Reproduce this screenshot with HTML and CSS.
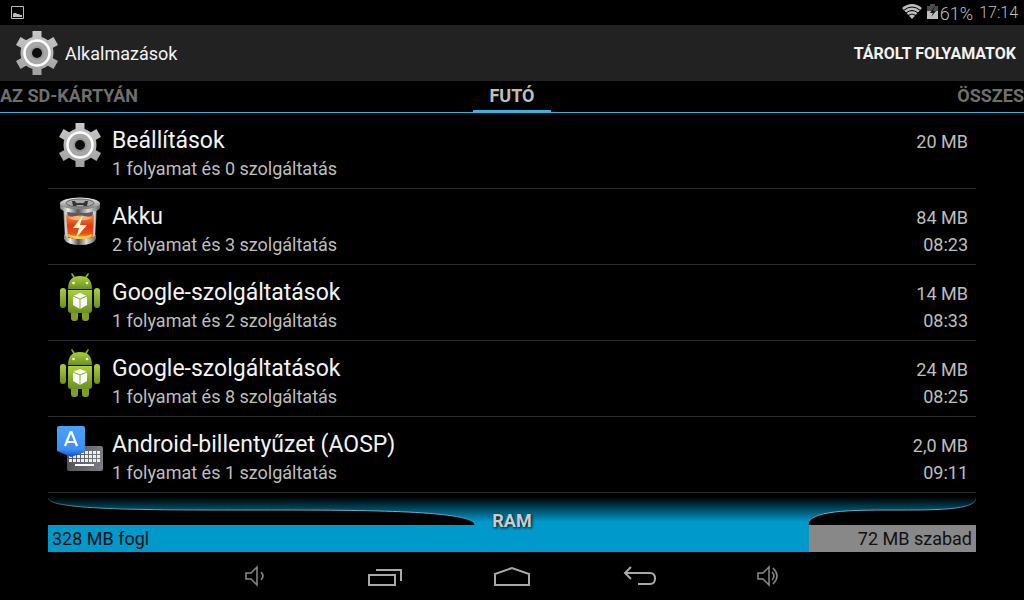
FILE: index.html
```html
<!DOCTYPE html>
<html lang="hu">
<head>
    <meta charset="utf-8">
    <title>Alkalmazások</title>
    <link rel="stylesheet" href="styles.css">
</head>
<body>
    <!-- shared icons -->
    <svg class="sprite" aria-hidden="true">
        <defs>
            <linearGradient id="metal" gradientUnits="userSpaceOnUse" x1="0" y1="2" x2="0" y2="46">
                <stop offset="0" stop-color="#c8c8c8"/>
                <stop offset="1" stop-color="#a0a0a0"/>
            </linearGradient>
            <linearGradient id="chrome">
                <stop offset="0" stop-color="#777"/>
                <stop offset="0.2" stop-color="#eee"/>
                <stop offset="0.45" stop-color="#555"/>
                <stop offset="0.7" stop-color="#ddd"/>
                <stop offset="1" stop-color="#666"/>
            </linearGradient>
            <linearGradient id="lid" x1="0" y1="0" x2="0" y2="1">
                <stop offset="0" stop-color="#f2f2f2"/>
                <stop offset="1" stop-color="#777"/>
            </linearGradient>
            <linearGradient id="fluid" x1="0" y1="0" x2="0" y2="1">
                <stop offset="0" stop-color="#f28a3a"/>
                <stop offset="0.45" stop-color="#dc3c12"/>
                <stop offset="0.75" stop-color="#e8501a"/>
                <stop offset="1" stop-color="#fdc93c"/>
            </linearGradient>
            <linearGradient id="green" x1="0" y1="0" x2="0" y2="1">
                <stop offset="0" stop-color="#a9cf3c"/>
                <stop offset="1" stop-color="#6d8f1e"/>
            </linearGradient>
            <linearGradient id="blue" x1="0" y1="0" x2="0" y2="1">
                <stop offset="0" stop-color="#4aa3f8"/>
                <stop offset="0.75" stop-color="#3d8ff0"/>
                <stop offset="1" stop-color="#1746e0"/>
            </linearGradient>
            <linearGradient id="keys">
                <stop offset="0" stop-color="#50555c"/>
                <stop offset="1" stop-color="#7b7f84"/>
            </linearGradient>
            <pattern id="keyDots" x="13" y="26" width="4" height="4" patternUnits="userSpaceOnUse">
                <rect width="3" height="3" fill="#eee"/>
            </pattern>
        </defs>
        <symbol id="gear" viewBox="0 0 48 48">
            <path fill="url(#metal)" d="M19.500 2h9v6.500q3 1 6 3l6-3.500l4.500 8l-5.500 3q1 5 0 10l5.500 3l-4.500 8l-6-3.500q-3 2-6 3V46h-9v-6.500q-3-1-6-3l-6 3.500l-4.500-8l5.500-3q-1-5 0-10l-5.500-3l4.500-8l6 3.500q3-2 6-3z"/>
            <circle cx="24" cy="24" r="16.500" fill="url(#metal)"/>
            <circle cx="24" cy="24" r="12.500" fill="#a8a8a8" stroke="#fff" stroke-width="2.500"/>
            <circle cx="24" cy="24" r="7" fill="#979797"/>
            <circle cx="24" cy="24" r="5" fill="#0c0c0c"/>
        </symbol>
        <symbol id="battery" viewBox="0 0 48 48">
            <path d="M7 12h34l-2 28H9z" fill="#5c5c60"/>
            <path d="M8 12h3l2 28h-4zM37 12h3l-1 28h-3z" fill="#ccc"/>
            <path d="M10 18q14 5 28 0l-1 22q-13 5-25 0z" fill="url(#fluid)"/>
            <path d="M12 21q12-5 24 0q-12 5-24 0z" fill="#f8b070"/>
            <path d="M8 37q2 5 16 5t16-5v5q-3 6-16 6t-16-6z" fill="url(#chrome)"/>
            <path d="M12 37q12 5 24 0l-1 3q-11 4-22 0z" fill="#fdca3e"/>
            <path d="M4 7v4q3 5 20 5t20-5V7z" fill="url(#chrome)"/>
            <ellipse cx="24" cy="6.500" rx="20" ry="6" fill="url(#lid)"/>
            <ellipse cx="24" cy="6" rx="14" ry="4" fill="#aaa" stroke="#666"/>
            <path d="M16 4h3l1 2h8l1-2h3l-1 5h-3l-1-1h-6l-1 1h-3z" fill="#333"/>
            <path d="M27 18l-10 13h6l-3 10l11-13h-7z" fill="#fff4d0"/>
        </symbol>
        <symbol id="android" viewBox="0 0 48 48">
            <path d="M16 1l3 5M32 1l-3 5" stroke="#8fb52c" stroke-width="1.500" stroke-linecap="round"/>
            <path d="M12 16q0-13 12-13t12 13z" fill="url(#green)"/>
            <circle cx="17.500" cy="10" r="1.300" fill="#fff"/>
            <circle cx="31" cy="10" r="1.300" fill="#fff"/>
            <rect x="4" y="15" width="6" height="20" rx="3" fill="url(#green)"/>
            <rect x="38" y="15" width="6" height="20" rx="3" fill="url(#green)"/>
            <rect x="15" y="34" width="7" height="14" rx="3" fill="#7c9f28"/>
            <rect x="26" y="34" width="7" height="14" rx="3" fill="#7c9f28"/>
            <path d="M12 17h24v20q0 3-3 3H15q-3 0-3-3z" fill="url(#green)"/>
            <path d="M24 20l7 3v9l-7 4l-7-4v-9z" fill="#fff"/>
            <path d="M17 23l7 3l7-3M24 26v10" fill="none" stroke="#87a83a" stroke-width="1"/>
        </symbol>
        <symbol id="keyboard" viewBox="0 0 48 48">
            <rect x="11" y="21" width="36" height="25" rx="2" fill="url(#keys)"/>
            <rect x="13" y="26" width="31" height="11" fill="url(#keyDots)"/>
            <rect x="19" y="39" width="19" height="2" fill="#fff"/>
            <path d="M1 3q0-2 2-2h24q2 0 2 2v24l-14 5l-14-6z" fill="url(#blue)"/>
            <path d="M9 21l5.500-14h1l5.500 14M11 17h8" fill="none" stroke="#fff" stroke-width="2.200"/>
        </symbol>
    </svg>

    <header class="status">
        <svg class="shot" width="13" height="13" viewBox="0 0 13 13" role="img" aria-label="Képernyőkép">
            <path d="M.5.500h12v12H.5z" fill="none" stroke="#bbb"/>
            <path d="M2 11V8l1-1h2l1 1h2l1 1h2v2z" fill="#bbb"/>
        </svg>
        <div class="status-right">
            <svg width="20" height="15" viewBox="0 0 20 15" role="img" aria-label="Wi-Fi">
                <path d="M10 15L0 4Q10-4 20 4z" fill="#bdbdbd"/>
                <path d="M1.500 6.500q8.500-7 17 0M4 9q6-5 12 0M6 11.500q4-3 8 0" fill="none" stroke="#000" stroke-width="1"/>
            </svg>
            <svg class="charge" width="11" height="15" viewBox="0 0 11 15" role="img" aria-label="Töltés">
                <path d="M3 0h5v2h3v13H0V2h3z" fill="#4c4c4c"/>
                <path d="M0 7h11v8H0z" fill="#bdbdbd"/>
                <path d="M8 2L3 9h3l-2 4l5-6H6z" fill="#111"/>
            </svg>
            <span class="percent">61%</span>
            <span class="clock">17:14</span>
        </div>
    </header>

    <div class="action-bar">
        <svg class="icon"><use href="#gear"/></svg>
        <h1>Alkalmazások</h1>
        <button class="action">TÁROLT FOLYAMATOK</button>
    </div>

    <nav class="tabs">
        <button class="tab left">AZ SD-KÁRTYÁN</button>
        <button class="tab active">FUTÓ</button>
        <button class="tab right">ÖSSZES</button>
    </nav>

    <main>
        <ul class="list">
            <li><a class="row" href="#">
                <svg class="icon"><use href="#gear"/></svg>
                <div class="info"><p class="name">Beállítások</p><p>1 folyamat és 0 szolgáltatás</p></div>
                <div class="usage"><p>20 MB</p></div>
            </a></li>
            <li><a class="row" href="#">
                <svg class="icon"><use href="#battery"/></svg>
                <div class="info"><p class="name">Akku</p><p>2 folyamat és 3 szolgáltatás</p></div>
                <div class="usage"><p>84 MB</p><p>08:23</p></div>
            </a></li>
            <li><a class="row" href="#">
                <svg class="icon"><use href="#android"/></svg>
                <div class="info"><p class="name">Google-szolgáltatások</p><p>1 folyamat és 2 szolgáltatás</p></div>
                <div class="usage"><p>14 MB</p><p>08:33</p></div>
            </a></li>
            <li><a class="row" href="#">
                <svg class="icon"><use href="#android"/></svg>
                <div class="info"><p class="name">Google-szolgáltatások</p><p>1 folyamat és 8 szolgáltatás</p></div>
                <div class="usage"><p>24 MB</p><p>08:25</p></div>
            </a></li>
            <li><a class="row" href="#">
                <svg class="icon"><use href="#keyboard"/></svg>
                <div class="info"><p class="name">Android-billentyűzet (AOSP)</p><p>1 folyamat és 1 szolgáltatás</p></div>
                <div class="usage"><p>2,0 MB</p><p>09:11</p></div>
            </a></li>
        </ul>

        <section class="ram">
            <svg class="curve" viewBox="0 0 928 32" preserveAspectRatio="none" aria-hidden="true">
                <defs>
                    <linearGradient id="glow" gradientUnits="userSpaceOnUse" x1="0" y1="4" x2="0" y2="29">
                        <stop offset="0" stop-color="#000"/>
                        <stop offset="1" stop-color="#09c"/>
                    </linearGradient>
                    <linearGradient id="edge" gradientUnits="userSpaceOnUse" x1="0" y1="4" x2="0" y2="32">
                        <stop offset="0" stop-color="#222"/>
                        <stop offset="0.5" stop-color="#6fb0c8"/>
                        <stop offset="1" stop-color="#09c"/>
                    </linearGradient>
                </defs>
                <path d="M0 4V5C0 30 427 3 427 32H760C760 3 928 30 928 5V4z" fill="url(#glow)"/>
                <path d="M0 5C0 30 427 3 427 32M760 32C760 3 928 30 928 5" fill="none" stroke="url(#edge)"/>
            </svg>
            <div class="bar">
                <span class="used" style="width: 82%">328 MB fogl</span>
                <span class="free" style="width: 18%">72 MB szabad</span>
            </div>
            <h2 class="ram-label">RAM</h2>
        </section>
    </main>

    <footer class="nav">
        <button aria-label="Halkítás">
            <svg width="36" height="24" viewBox="0 0 36 24">
                <path class="thin" d="M8 9h5l6-6v18l-6-6H8zM23 8q4 4 0 8"/>
            </svg>
        </button>
        <button aria-label="Legutóbbiak">
            <svg width="36" height="24" viewBox="0 0 36 24">
                <path d="M3 11h26v10H3zM10 6h25v11"/>
            </svg>
        </button>
        <button aria-label="Kezdőképernyő">
            <svg width="36" height="24" viewBox="0 0 36 24">
                <path d="M1 21V10l17-6l17 6v11z"/>
            </svg>
        </button>
        <button aria-label="Vissza">
            <svg width="36" height="24" viewBox="0 0 36 24">
                <path d="M9 3L3 9l6 6M3 9h25q5 0 5 5.500t-5 5.500H16"/>
            </svg>
        </button>
        <button aria-label="Hangosítás">
            <svg width="36" height="24" viewBox="0 0 36 24">
                <path class="thin" d="M8 9h5l6-6v18l-6-6H8zM22 8q4 4 0 8M23 4q8 8 0 16"/>
            </svg>
        </button>
    </footer>
</body>
</html>
```

FILE: styles.css
```css
body{
    display: flex;
    flex-direction: column;
    min-height: 100vh;
    margin: 0px;
    background-color: #000;
    color: #bebebe;
    font-family: Roboto, "Noto Sans", sans-serif;
    font-size: 18px;
}

h1, h2, p, ul{
    margin: 0px;
    padding: 0px;
}

button{
    padding: 0px;
    border: none;
    background: none;
    font-family: inherit;
    cursor: pointer;
}

.sprite{
    position: absolute;
    width: 0px;
    height: 0px;
}

.icon{
    width: 48px;
    height: 48px;
    flex-shrink: 0;
}

/* status bar */
.status{
    display: flex;
    justify-content: space-between;
    align-items: center;
    height: 25px;
    padding: 0px 6px 0px 11px;
}

.status-right{
    display: flex;
    align-items: center;
    font-weight: 300;
}

.status-right svg{
    margin-bottom: 2px;
}

.status-right .charge{
    margin-left: 5px;
    margin-right: 2px;
}

.percent{
    padding-top: 2px;
    font-size: 18px;
}

.clock{
    margin-left: 6px;
    font-size: 16px;
}

/* title */
.action-bar{
    display: flex;
    align-items: center;
    height: 56px;
    padding: 0px 8px 0px 13px;
    background-color: #222;
}

.action-bar h1{
    flex: 1;
    margin-left: 4px;
    color: #f3f3f3;
    font-size: 18px;
    font-weight: 400;
}

.action{
    color: #f3f3f3;
    font-size: 16px;
    font-weight: 700;
}

/* tabs */
.tabs{
    display: grid;
    grid-template-columns: 1fr auto 1fr;
    height: 31px;
    border-bottom: 1px solid #33b5e5;
}

.tab{
    padding: 0px 16px;
    border-bottom: 2px solid transparent;
    color: #6f6f6f;
    font-size: 18px;
    font-weight: 700;
}

.tab.left{
    justify-self: start;
    padding-left: 0px;
}

.tab.right{
    justify-self: end;
    padding-right: 0px;
}

.tab.active{
    border-bottom-color: #33b5e5;
    color: #bebebe;
}

/* process list */
main{
    flex: 1;
    padding: 0px 48px;
}

.list{
    list-style: none;
}

.row{
    display: flex;
    gap: 8px;
    height: 67px;
    padding: 8px 8px 0px;
    border-bottom: 1px solid #2a2a2a;
    color: #bebebe;
    text-decoration: none;
}

.info{
    flex: 1;
    padding-top: 4px;
    line-height: 24px;
}

.info .name{
    line-height: 32px;
    color: #f3f3f3;
    font-size: 23px;
}

.usage{
    padding-top: 7px;
    text-align: right;
    line-height: 27px;
}

/* memory bar */
.ram{
    position: relative;
}

.curve{
    display: block;
    width: 100%;
    height: 32px;
}

.bar{
    display: flex;
    color: #111;
    line-height: 27px;
}

.used, .free{
    box-sizing: border-box;
    padding: 0px 4px;
    white-space: nowrap;
}

.used{
    background-color: #09c;
}

.free{
    background-color: #888;
    text-align: right;
}

.ram-label{
    position: absolute;
    top: 16px;
    left: 0px;
    right: 0px;
    color: #ccc;
    font-size: 18px;
    line-height: 24px;
    text-align: center;
    text-shadow: 1px 1px 3px #000;
}

/* system buttons */
.nav{
    display: flex;
    justify-content: center;
    height: 48px;
}

.nav button{
    width: 128px;
}

.nav svg{
    display: block;
    margin: 0px auto;
    fill: none;
    stroke: #a8a8a8;
    stroke-width: 2;
}

.nav .thin{
    stroke: #8a8a8a;
    stroke-width: 1.5;
}
```
